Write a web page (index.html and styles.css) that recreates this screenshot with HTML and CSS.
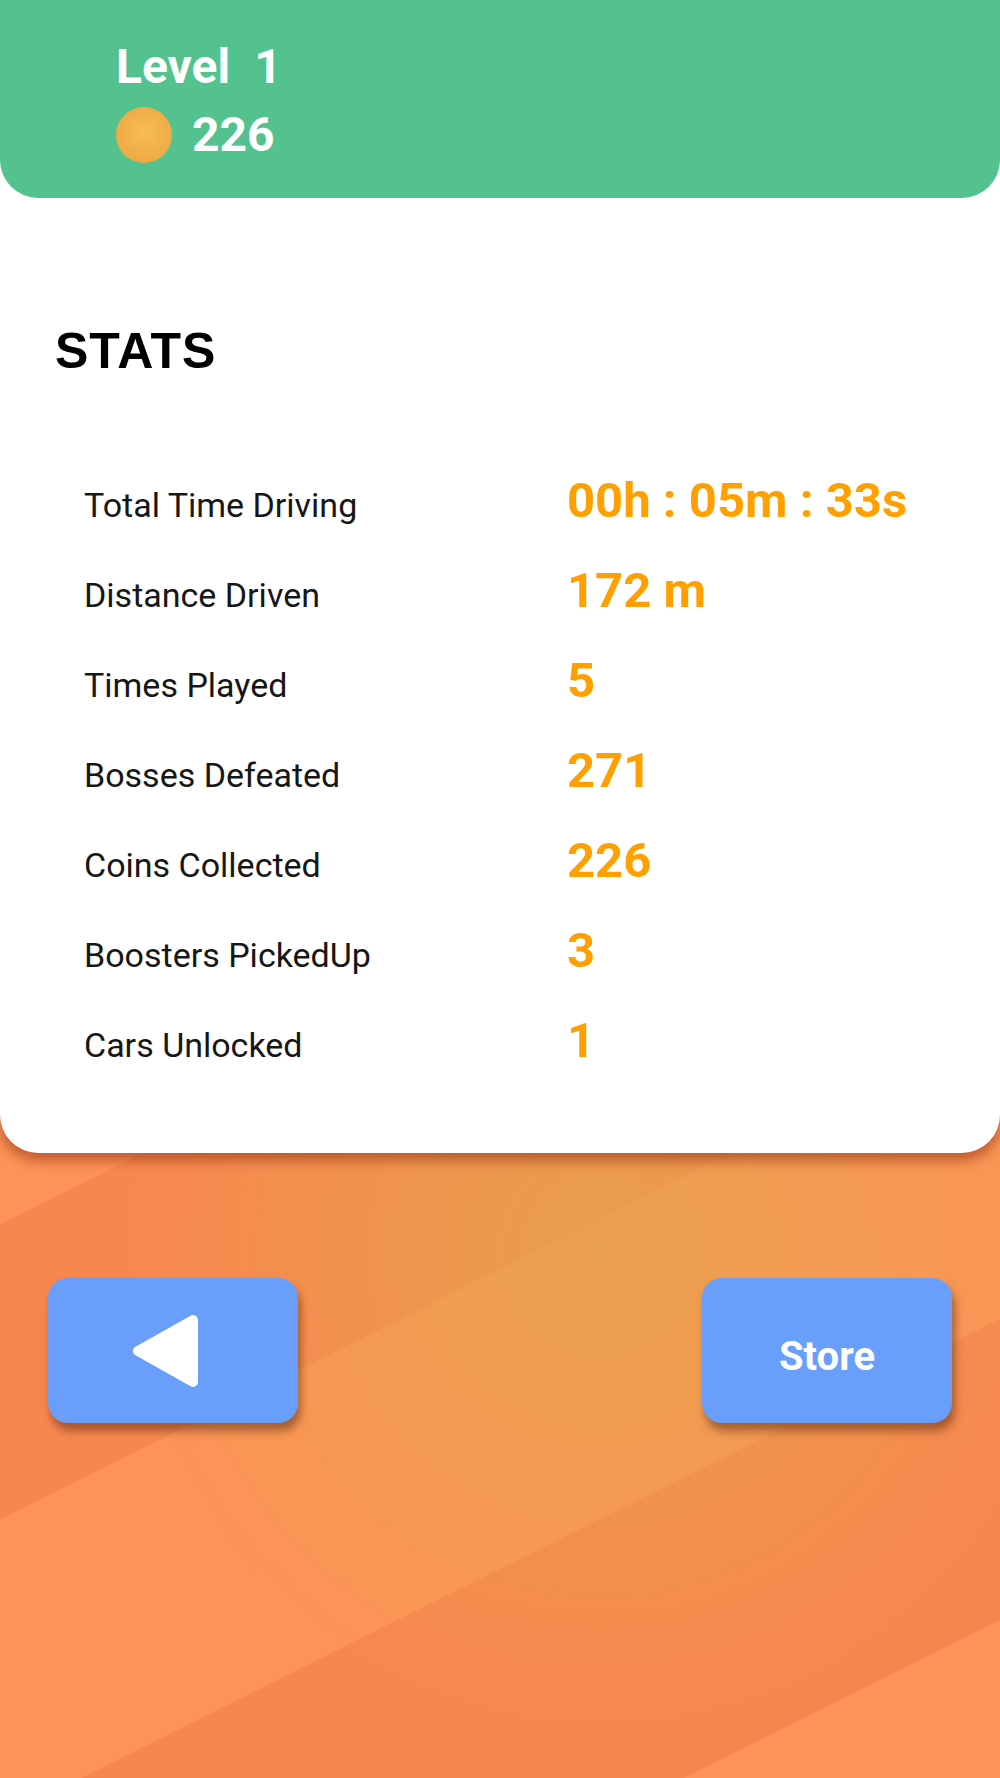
FILE: index.html
```html
<!DOCTYPE html>
<html lang="en">
<head>
<meta charset="utf-8">
<title>Stats</title>
<link rel="stylesheet" href="styles.css">
</head>
<body>
<div class="screen">
  <section class="card">
    <header class="topbar">
      <div class="level">Level 1</div>
      <div class="coins"><span class="coin"></span><span class="coin-count">226</span></div>
    </header>
    <h1 class="title">STATS</h1>
    <div class="stats">
      <div class="row"><span class="label">Total Time Driving</span><span class="value">00h : 05m : 33s</span></div>
      <div class="row"><span class="label">Distance Driven</span><span class="value">172 m</span></div>
      <div class="row"><span class="label">Times Played</span><span class="value">5</span></div>
      <div class="row"><span class="label">Bosses Defeated</span><span class="value">271</span></div>
      <div class="row"><span class="label">Coins Collected</span><span class="value">226</span></div>
      <div class="row"><span class="label">Boosters PickedUp</span><span class="value">3</span></div>
      <div class="row"><span class="label">Cars Unlocked</span><span class="value">1</span></div>
    </div>
  </section>
  <div class="actions">
    <button class="btn btn-back" aria-label="Back">
      <svg class="back-icon" width="66" height="74" viewBox="0 0 66 74"><polygon points="6,37 61,6 61,68" fill="#fff" stroke="#fff" stroke-width="10" stroke-linejoin="round"/></svg>
    </button>
    <button class="btn btn-store">Store</button>
  </div>
</div>
</body>
</html>
```

FILE: styles.css
```css
* { box-sizing: border-box; }
html, body { margin: 0; padding: 0; }
body { font-family: Roboto, "Noto Sans", sans-serif; }

.screen {
  width: 1000px;
  height: 1778px;
  overflow: hidden;
  display: flex;
  flex-direction: column;
  background:
    radial-gradient(circle 480px at 600px 1250px, rgba(228, 165, 76, 0.78), rgba(228, 165, 76, 0)),
    linear-gradient(153.43deg,
      #FD9357 0, #FD9357 1095px,
      #F8874F 1095px, #F8874F 1359px,
      #FD9357 1359px, #FD9357 1627px,
      #F8874F 1627px, #F8874F 1896px,
      #FD9357 1896px);
}

.card {
  width: 1000px;
  background: #fff;
  border-radius: 0 0 38px 38px;
  box-shadow: 0 8px 12px rgba(150, 50, 20, 0.55);
  padding-bottom: 52px;
}

.topbar {
  height: 198px;
  background: #54C28E;
  border-radius: 0 0 38px 38px;
  padding: 43px 0 0 116px;
  color: #fff;
  font-weight: 700;
}

.level {
  font-size: 48px;
  line-height: 48px;
  word-spacing: 12px;
}

.coins {
  display: flex;
  align-items: center;
  height: 56px;
  margin-top: 16px;
}

.coin {
  width: 56px;
  height: 56px;
  border-radius: 50%;
  background: radial-gradient(circle at 52% 45%, #F5BD53 0%, #F1AE48 55%, #EDA040 100%);
}

.coin-count {
  font-size: 48px;
  line-height: 48px;
  margin-left: 20px;
}

.title {
  margin: 128px 0 0 55px;
  font-family: "Liberation Sans", Arial, sans-serif;
  font-weight: 700;
  font-size: 50px;
  line-height: 50px;
  letter-spacing: 1px;
  color: #000;
}

.stats {
  margin-top: 95px;
  padding-left: 84px;
}

.row {
  display: flex;
  align-items: baseline;
  height: 90px;
}

.label {
  width: 483px;
  font-size: 34px;
  line-height: 60px;
  color: #161616;
}

.value {
  font-size: 49px;
  font-weight: 700;
  line-height: 60px;
  color: #FFA000;
}

.actions {
  display: flex;
  justify-content: space-between;
  padding: 0 48px;
  margin-top: 125px;
}

.btn {
  width: 250px;
  height: 145px;
  border: 0;
  border-radius: 20px;
  background: #6A9EFB;
  box-shadow: 3px 8px 8px rgba(90, 40, 10, 0.5);
  display: flex;
  align-items: center;
  justify-content: center;
  padding: 0;
}

.back-icon { margin-right: 16px; }

.btn-store {
  font-family: Roboto, sans-serif;
  font-weight: 700;
  font-size: 40px;
  line-height: 40px;
  color: #fff;
  padding-top: 12px;
}
```
